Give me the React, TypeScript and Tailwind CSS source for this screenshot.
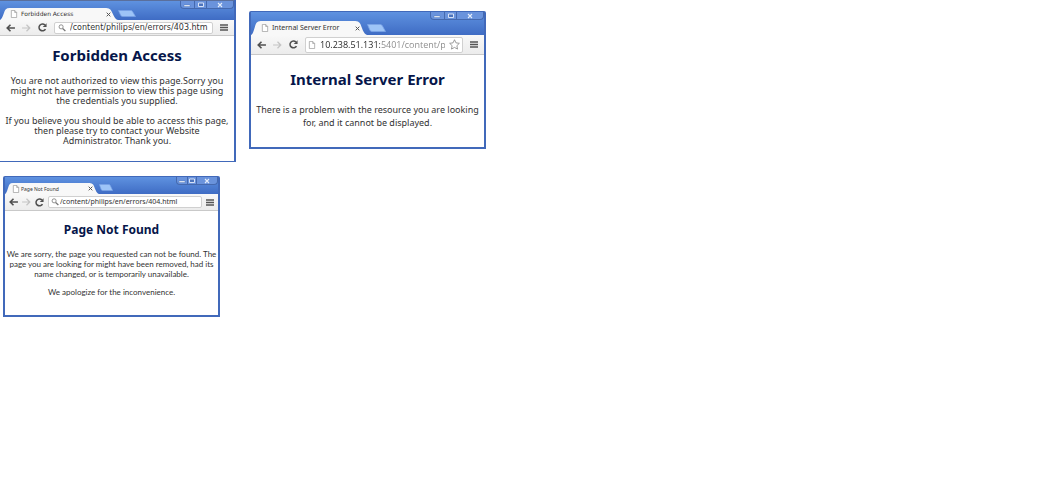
import type { ReactNode } from "react";

type Theme = {
  frame: string;
  strip: string;
  tab: string;
  tabInner: string;
  tabText: string;
  newTab: string;
  controls: string;
  toolbar: string;
  field: string;
  input: string;
  page: string;
  icon: "search" | "page";
  star?: boolean;
};

function PageIcon() {
  return (
    <svg viewBox="0 0 8 9" className="h-2 w-2 shrink-0" fill="#fff" stroke="#999" strokeWidth="0.8">
      <path d="M1 .5h3.800L7 2.800v5.700H1z" />
      <path d="M4.800.5v2.300H7" fill="none" />
    </svg>
  );
}

function SearchIcon() {
  return (
    <svg viewBox="0 0 9 9" className="h-2 w-2 shrink-0" fill="none" stroke="#777">
      <circle cx="3.5" cy="3.2" r="2.3" strokeWidth=".9" />
      <path d="M5.200 5 8.300 7.800" strokeWidth="1.4" />
    </svg>
  );
}

function Arrow({ back }: { back?: boolean }) {
  return (
    <svg viewBox="0 0 10 9" className="h-2 w-[9px]" fill="none" stroke={back ? "#505050" : "#c4c4c4"} strokeWidth={back ? 1.8 : 1.4}>
      {back ? <path d="M5 .8 1.300 4.500 5 8.200M1.500 4.500H10" /> : <path d="M5 .8 8.700 4.500 5 8.200M8.500 4.500H0" />}
    </svg>
  );
}

function Reload() {
  return (
    <svg viewBox="0 0 10 10" className="h-[9px] w-[9px]" fill="none" stroke="#505050" strokeWidth="1.7">
      <path d="M8.300 6.700A3.800 3.800 0 1 1 7.700 2.300" />
      <path d="M9.500.3v4.200H5.300z" fill="#505050" stroke="none" />
    </svg>
  );
}

function WindowButtons({ className }: { className: string }) {
  return (
    <div className={`ml-auto grid h-2 shrink-0 grid-cols-[14fr_13fr_26fr] self-start rounded-b-sm border border-t-0 border-[#4569ae] bg-[#6a93dc] ${className}`}>
      <button aria-label="Minimize" className="flex items-center justify-center border-r border-[#4569ae]">
        <svg viewBox="0 0 8 6" className="h-[6px] w-2"><path d="M1 3h6v1.500H1z" fill="#fff" stroke="#4569ae" strokeWidth=".4" /></svg>
      </button>
      <button aria-label="Maximize" className="flex items-center justify-center border-r border-[#4569ae]">
        <svg viewBox="0 0 8 6" className="h-[6px] w-2"><path d="M1.500 1h5v3.500h-5z" fill="#4c74bd" stroke="#e4ecfa" strokeWidth=".9" /></svg>
      </button>
      <button aria-label="Close window" className="flex items-center justify-center">
        <svg viewBox="0 0 8 6" className="h-[6px] w-2"><path d="m2 1 4 4m0-4L2 5" stroke="#e4ecfa" strokeWidth="1.1" /></svg>
      </button>
    </div>
  );
}

function BrowserWindow({ title, url, theme, children }: { title: string; url: string; theme: Theme; children: ReactNode }) {
  return (
    <section className={`flex max-w-full flex-col overflow-hidden border-[#4169ba] bg-white ${theme.frame}`}>
      <header className={`flex items-end bg-linear-to-b from-[#5f92e0] to-[#3f6cc4] ${theme.strip}`}>
        <div className={`relative flex shrink-0 items-center ${theme.tab}`}>
          <svg viewBox="0 0 120 14" preserveAspectRatio="none" className="absolute inset-0 h-full w-full">
            <path d="M0 14C3 13 4 3 6 1.500Q7 0 10 0H108Q111 0 112.500 2C115 6 116 13 120 14Z" fill="#f8f8f8" />
          </svg>
          <div className={`relative flex w-full items-center ${theme.tabInner}`}>
            <PageIcon />
            <span className={`whitespace-nowrap text-[#333] ${theme.tabText}`}>{title}</span>
            <button aria-label="Close tab" className="ml-auto">
              <svg viewBox="0 0 6 6" className="h-[5px] w-[5px]"><path d="m.8.8 4.400 4.400m0-4.400L.8 5.200" stroke="#555" strokeWidth="1.2" /></svg>
            </button>
          </div>
        </div>
        <button aria-label="New tab" className="mb-[3px] shrink-0">
          <svg viewBox="0 0 19 8" preserveAspectRatio="none" className={theme.newTab}>
            <path d="M.5.5H13.500Q14.800.5 15.500 2L18.500 7.500H5Q3.500 7.500 2.800 6Z" fill="#9dc4f7" stroke="#7aa3e6" strokeWidth=".8" />
          </svg>
        </button>
        <WindowButtons className={theme.controls} />
      </header>
      <nav className={`flex items-center border-b border-[#c9c9c9] bg-linear-to-b from-[#f8f8f8] to-[#ececec] ${theme.toolbar}`}>
        <button aria-label="Back"><Arrow back /></button>
        <button aria-label="Forward"><Arrow /></button>
        <button aria-label="Reload"><Reload /></button>
        <div className={`flex min-w-0 flex-1 items-center rounded-xs border border-[#d0d0d0] bg-white ${theme.field}`}>
          {theme.icon === "search" ? <SearchIcon /> : <PageIcon />}
          <input aria-label={`Address of ${title}`} defaultValue={url} className={`min-w-0 flex-1 outline-none ${theme.input}`} />
          {theme.star && (
            <button aria-label="Bookmark">
              <svg viewBox="0 0 12 12" className="h-[11px] w-[11px]" fill="#fff" stroke="#888" strokeWidth=".9">
                <path d="m6 .8 1.600 3.400 3.700.5-2.700 2.600.7 3.700L6 9.200 2.700 11l.7-3.700L.7 4.700l3.700-.5Z" />
              </svg>
            </button>
          )}
        </div>
        <button aria-label="Menu">
          <svg viewBox="0 0 8 7" className="h-[7px] w-2"><path d="M0 1h8M0 3.500h8M0 6h8" stroke="#555" strokeWidth="1.3" /></svg>
        </button>
      </nav>
      <div className={`text-center text-[#333] ${theme.page}`}>{children}</div>
    </section>
  );
}

const forbidden: Theme = {
  frame: "w-59 border-r-2 border-b",
  strip: "h-5 border-t border-[#5a6f9c]",
  tab: "h-3 w-[118px]",
  tabInner: "gap-[3px] pl-[10px] pr-[7px]",
  tabText: "font-['DejaVu_Sans'] text-[6px] leading-[8px]",
  newTab: "h-[7px] w-[18px]",
  controls: "w-[54px]",
  toolbar: "h-4 gap-[7px] px-[6px]",
  field: "h-3 gap-1 px-[3px]",
  input: "font-['Noto_Sans'] text-[9px] leading-[10px] text-[#333]",
  page: "flex flex-col gap-[10px] px-1 pt-2 pb-[15px] font-['Noto_Sans'] text-[9px] leading-[10px]",
  icon: "search",
};

const serverError: Theme = {
  frame: "mt-[11px] w-[237px] rounded-t-xs border-2 border-t",
  strip: "h-[23px]",
  tab: "h-[14px] w-[116px]",
  tabInner: "gap-[3px] pl-[10px] pr-[7px]",
  tabText: "font-['Noto_Sans'] text-[7px] leading-[10px]",
  newTab: "h-2 w-[19px]",
  controls: "w-[54px]",
  toolbar: "h-5 gap-[7px] px-[6px]",
  field: "h-4 gap-1 px-[2px]",
  input: "bg-[linear-gradient(to_right,#222_60px,#888_60px)] bg-clip-text font-['Open_Sans'] text-[9px] leading-[14px] text-transparent",
  page: "flex flex-col gap-3 px-1 pt-3 pb-[18px] font-['Noto_Sans'] text-[9px] leading-[13px]",
  icon: "page",
  star: true,
};

const notFound: Theme = {
  frame: "mt-[14px] ml-[3px] w-[217px] rounded-t-xs border-2 border-t",
  strip: "h-[17px]",
  tab: "h-[11px] w-[94px]",
  tabInner: "gap-px pl-[7px] pr-[6px]",
  tabText: "font-['Noto_Sans'] text-[5px] leading-[8px]",
  newTab: "h-[7px] w-[14px]",
  controls: "w-[42px]",
  toolbar: "h-[17px] gap-1 px-1",
  field: "h-3 gap-px px-[2px]",
  input: "font-['Noto_Sans'] text-[7px] leading-[10px] text-[#333]",
  page: "flex flex-col gap-2 pt-[10px] pb-[18px] font-['Lato'] text-[8px] leading-[10px]",
  icon: "search",
};

export default function App() {
  return (
    <main className="flex flex-col items-start">
      <div className="flex max-w-full flex-wrap items-start gap-x-[13px]">
        <BrowserWindow title="Forbidden Access" url="/content/philips/en/errors/403.htm" theme={{ ...forbidden, input: "font-['DejaVu_Sans'] text-[8px] leading-[10px] text-[#333]" }}>
          <h1 className="text-[15px] leading-[22px] font-bold text-[#06164a]">Forbidden Access</h1>
          <p>You are not authorized to view this page.Sorry you might not have permission to view this page using the credentials you supplied.</p>
          <p>If you believe you should be able to access this page, then please try to contact your Website Administrator. Thank you.</p>
        </BrowserWindow>
        <BrowserWindow title="Internal Server Error" url="10.238.51.131:5401/content/p" theme={serverError}>
          <h1 className="text-[15px] leading-[24px] font-bold text-[#06164a]">Internal Server Error</h1>
          <p>There is a problem with the resource you are looking for, and it cannot be displayed.</p>
        </BrowserWindow>
      </div>
      <BrowserWindow title="Page Not Found" url="/content/philips/en/errors/404.html" theme={notFound}>
        <h1 className="pb-[2px] font-['Noto_Sans'] text-[12px] leading-[18px] font-bold text-[#06164a]">Page Not Found</h1>
        <p>We are sorry, the page you requested can not be found. The page you are looking for might have been removed, had its name changed, or is temporarily unavailable.</p>
        <p>We apologize for the inconvenience.</p>
      </BrowserWindow>
    </main>
  );
}
